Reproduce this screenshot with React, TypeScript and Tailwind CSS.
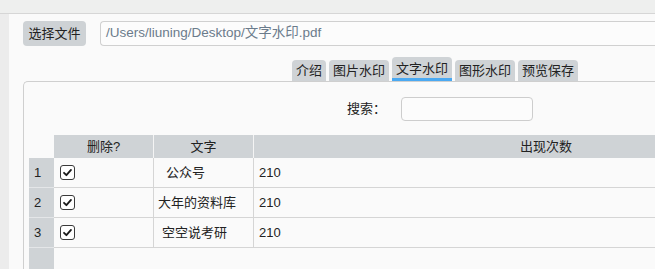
const TABS = [
  { label: '介绍', active: false },
  { label: '图片水印', active: false },
  { label: '文字水印', active: true },
  { label: '图形水印', active: false },
  { label: '预览保存', active: false },
];

const ROWS = [
  { word: '公众号', pad: 'pl-[12px]', count: '210' },
  { word: '大年的资料库', pad: 'pl-[4px]', count: '210' },
  { word: '空空说考研', pad: 'pl-[8px]', count: '210' },
];

function CheckBox() {
  return (
    <div className="w-[15px] h-[15px] rounded-[3px] border border-[#3a3a3a] bg-white flex items-center justify-center">
      <svg viewBox="0 0 12 12" className="w-[11px] h-[11px]">
        <path d="M2.2 6.3 L4.8 8.9 L9.8 3.2" fill="none" stroke="#1a1a1a" strokeWidth="2" strokeLinecap="round" strokeLinejoin="round" />
      </svg>
    </div>
  );
}

export default function App() {
  return (
    <div
      className="w-[655px] h-[269px] overflow-hidden bg-[#fafafa] text-[13px] text-[#222]"
      style={{ fontFamily: '"Liberation Sans", "Noto Sans CJK SC", sans-serif' }}
    >
      {/* top band */}
      <div className="h-[14px] bg-[#eeefee] border-b border-[#d6d6d6]" />

      <div className="flex h-[255px]">
        <div className="w-[9px] flex-shrink-0 bg-[#ececec]" />

        <div className="flex-1 min-w-0 pl-[14px] pt-[7px] flex flex-col">
          {/* file row */}
          <div className="flex items-center gap-[14px] h-[25px]">
            <button className="w-[63px] h-[25px] flex-shrink-0 rounded-[4px] bg-[#ced2d5] text-[13px] text-[#222]">
              选择文件
            </button>
            <div className="w-[600px] flex-shrink-0 h-[25px] rounded-l-[4px] border border-r-0 border-[#d0d0d0] bg-[#fcfcfc] flex items-center pl-[5px] text-[13.5px] text-[#6b7b8b]">
              /Users/liuning/Desktop/文字水印.pdf
            </div>
          </div>

          {/* tabs */}
          <div className="flex items-end gap-[3px] pl-[269px] mt-[11px] h-[24px]">
            {TABS.map(t =>
              t.active ? (
                <div
                  key={t.label}
                  className="h-[24px] px-[4px] rounded-t-[4px] bg-[#cfd3d6] border-b-[3px] border-[#4aa9f2] flex items-start pt-[2px] text-[13px]"
                >
                  {t.label}
                </div>
              ) : (
                <div
                  key={t.label}
                  className="h-[21px] px-[4px] rounded-t-[4px] bg-[#cfd3d6] flex items-center text-[13px]"
                >
                  {t.label}
                </div>
              ),
            )}
          </div>

          {/* panel */}
          <div className="w-[700px] flex-1 border-l border-t border-[#cfcfcf] rounded-tl-[5px] pl-[5px] pt-[15px] flex flex-col">
            <div className="flex items-center h-[24px]">
              <span className="ml-[318px] w-[54px] text-[13px]">搜索：</span>
              <div className="w-[132px] h-[24px] rounded-[4px] border border-[#cdcdcd] bg-[#fcfcfc]" />
            </div>

            <div className="mt-[14px] flex flex-1">
              {/* index column */}
              <div className="w-[25px] flex-shrink-0 flex flex-col">
                <div className="h-[23px]" />
                <div className="flex-1 bg-[#cfd3d6]">
                  {ROWS.map((r, i) => (
                    <div key={i} className="h-[30px] border-b border-[#e4e6e8] flex items-center pl-[5px] text-[13px]">
                      {i + 1}
                    </div>
                  ))}
                </div>
              </div>

              {/* data columns */}
              <div className="flex-1 flex flex-col">
                <div className="h-[23px] flex bg-[#cfd3d6] text-[13px]">
                  <div className="w-[100px] flex items-center justify-center border-r border-[#f4f4f4]">删除?</div>
                  <div className="w-[100px] flex items-center justify-center border-r border-[#f4f4f4]">文字</div>
                  <div className="w-[584px] flex items-center justify-center">出现次数</div>
                </div>
                {ROWS.map((r, i) => (
                  <div key={i} className="h-[30px] flex border-b border-[#d5d5d5] text-[13px]">
                    <div className="w-[100px] flex items-center pl-[6px] border-r border-[#d5d5d5]">
                      <CheckBox />
                    </div>
                    <div className={`w-[100px] flex items-center border-r border-[#d5d5d5] ${r.pad}`}>{r.word}</div>
                    <div className="flex-1 flex items-center pl-[5px]">{r.count}</div>
                  </div>
                ))}
              </div>
            </div>
          </div>
        </div>
      </div>
    </div>
  );
}
